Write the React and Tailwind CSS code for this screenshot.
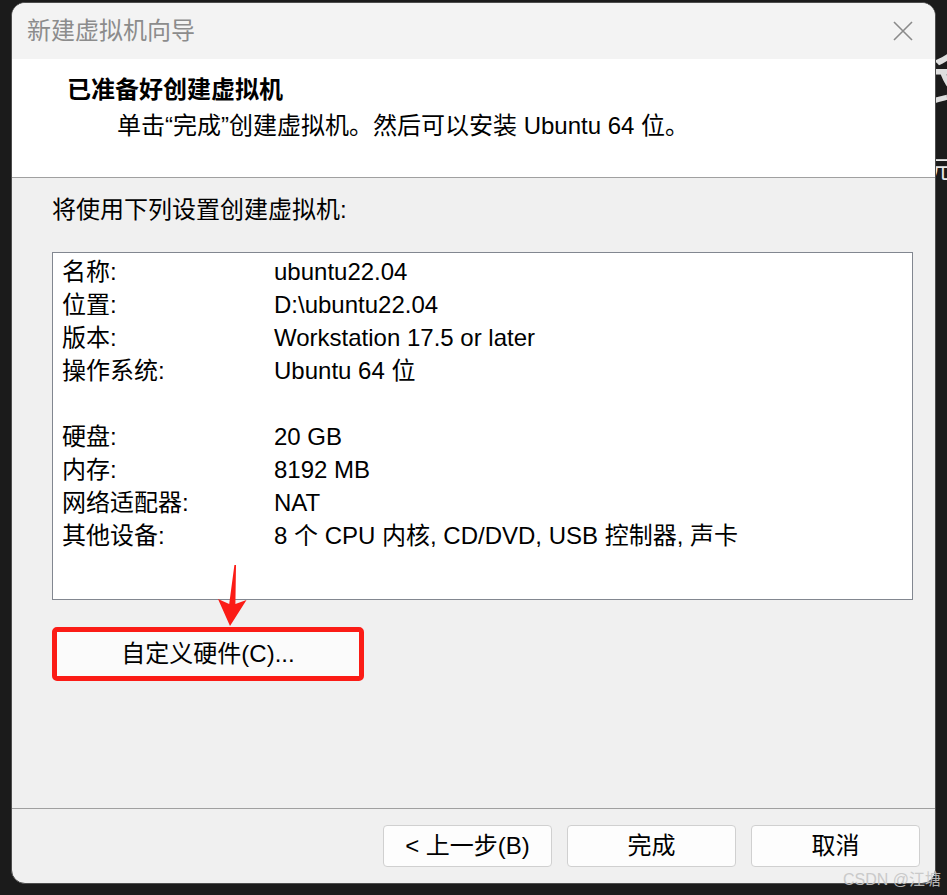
import React from "react";

const rows = [
  ["名称:", "ubuntu22.04"],
  ["位置:", "D:\\ubuntu22.04"],
  ["版本:", "Workstation 17.5 or later"],
  ["操作系统:", "Ubuntu 64 位"],
  ["", ""],
  ["硬盘:", "20 GB"],
  ["内存:", "8192 MB"],
  ["网络适配器:", "NAT"],
  ["其他设备:", "8 个 CPU 内核, CD/DVD, USB 控制器, 声卡"],
];

const FONT = { fontFamily: "'Liberation Sans', 'Noto Sans CJK SC', sans-serif" };

const CloseIcon = () => (
  <svg width="22" height="22" viewBox="0 0 22 22" fill="none">
    <path d="M2 2L20 20M20 2L2 20" stroke="#8a8a8a" strokeWidth="1.6" />
  </svg>
);

const WizardButton = ({ children }) => (
  <button className="w-[169px] h-[42px] rounded-[4px] border border-[#d0d0d0] bg-[#fdfdfd] text-[24px] text-black flex items-center justify-center">
    {children}
  </button>
);

export default function App() {
  return (
    <div className="relative w-[947px] h-[895px] bg-[#1b1b1b] overflow-hidden" style={FONT}>
      {/* bits of the window behind */}
      <span className="absolute left-[906px] top-[40px] text-[72px] leading-none text-[#dedede]">长</span>
      <span className="absolute left-[928px] top-[158px] text-[24px] leading-none text-[#e8e8e8]">元</span>

      <div className="relative ml-[11px] mt-[2px] w-[925px] h-[882px] rounded-[14px] border border-[#4d4d4d] bg-[#f0f0f0] overflow-hidden flex flex-col">
        {/* title bar */}
        <div className="h-[56px] shrink-0 bg-[#f3f3f3] flex items-center justify-between pl-[15px] pr-[21px]">
          <span className="text-[24px] text-[#8c8c8c]">新建虚拟机向导</span>
          <CloseIcon />
        </div>

        {/* header */}
        <div className="h-[118px] shrink-0 bg-white pl-[55px] pt-[16px]">
          <div className="text-[24px] leading-[30px] font-bold text-black">已准备好创建虚拟机</div>
          <div className="mt-[6px] pl-[50px] text-[24px] leading-[30px] text-black">
            单击“完成”创建虚拟机。然后可以安装 Ubuntu 64 位。
          </div>
        </div>
        <div className="h-px shrink-0 bg-[#a0a0a0]" />

        {/* body */}
        <div className="relative flex-1 px-[40px]">
          <div className="mt-[17px] text-[24px] leading-[30px] text-black">将使用下列设置创建虚拟机:</div>

          <div className="mt-[27px] w-[861px] h-[348px] border border-[#828790] bg-white pl-[9px] pt-[2px]">
            {rows.map(([k, v], i) => (
              <div key={i} className="grid grid-cols-[212px_1fr] h-[33px] text-[24px] leading-[33px] text-black">
                <span>{k}</span>
                <span>{v}</span>
              </div>
            ))}
          </div>

          <div className="mt-[27px] w-[312px] h-[54px] rounded-[5px] border-[5px] border-[#fb1c16] bg-[#fbfbfb] flex items-center justify-center text-[24px] text-black">
            自定义硬件(C)...
          </div>

          {/* annotation arrow */}
          <svg className="absolute left-[205px] top-[385px]" width="32" height="66" viewBox="0 0 32 66">
            <path d="M17.4 2 L19 2 L18.4 41 L29.5 37 L13 63 L1 36 L12.2 41 Z" fill="#fb1c16" />
          </svg>
        </div>

        <div className="h-px shrink-0 bg-[#a0a0a0]" />
        <div className="h-[74px] shrink-0 flex justify-end items-start gap-[15px] pt-[16px] pr-[15px]">
          <WizardButton>&lt; 上一步(B)</WizardButton>
          <WizardButton>完成</WizardButton>
          <WizardButton>取消</WizardButton>
        </div>
      </div>

      <span className="absolute left-[843px] top-[869px] whitespace-nowrap text-[16px] leading-[22px] text-[#c6c6c6] opacity-90">
        CSDN @江塘
      </span>
    </div>
  );
}
